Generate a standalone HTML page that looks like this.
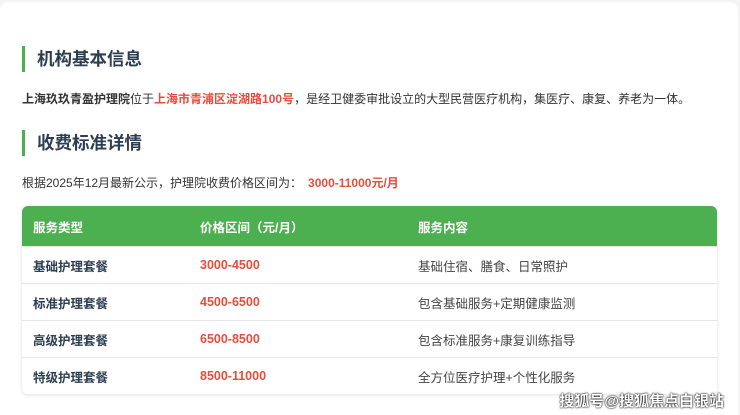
<!DOCTYPE html>
<html><head><meta charset="utf-8"><style>
html,body{margin:0;width:740px;height:415px;overflow:hidden}
body{background:#f4f4f4;font-family:"Liberation Sans","Noto Sans CJK SC",sans-serif;position:relative}
.card{position:absolute;left:0;top:2px;width:738px;height:413px;background:#fff;border-radius:8px 8px 0 0}
h2{position:absolute;left:22px;margin:0;padding-left:12px;border-left:3px solid #4caf50;font-size:17.5px;line-height:26px;color:#2c3e50;font-weight:bold}
p{position:absolute;left:22px;margin:0;font-size:12px;color:#333;white-space:nowrap}
.r{color:#e74c3c;font-weight:bold}
table{position:absolute;left:22px;top:206px;width:695px;border-collapse:collapse;font-size:12.5px;border-radius:6px;overflow:hidden;box-shadow:0 1px 4px rgba(0,0,0,.12)}
th{background:#4caf50;color:#fff;text-align:left;height:40px;padding:0 0 0 11px;font-weight:bold}
td{height:36px;padding:0 0 0 11px;border-top:1px solid #e6e6e6;color:#444}
td:first-child{font-weight:bold;color:#2c3e50}
td.r{color:#e74c3c}
.wm{position:absolute;right:16px;top:390px;font-size:15px;color:#fff;font-weight:bold;text-shadow:0 0 2px #000,0 0 1px #000}
</style></head><body>
<div class="card"></div>
<h2 style="top:46px">机构基本信息</h2>
<p style="top:90px"><b>上海玖玖青盈护理院</b>位于<span class="r">上海市青浦区淀湖路100号</span>，是经卫健委审批设立的大型民营医疗机构，集医疗、康复、养老为一体。</p>
<h2 style="top:130px">收费标准详情</h2>
<p style="top:174px">根据2025年12月最新公示，护理院收费价格区间为：<span class="r" style="margin-left:6px">3000-11000元/月</span></p>
<table>
<tr><th style="width:156px">服务类型</th><th style="width:207px">价格区间（元/月）</th><th>服务内容</th></tr>
<tr><td>基础护理套餐</td><td class="r">3000-4500</td><td>基础住宿、膳食、日常照护</td></tr>
<tr><td>标准护理套餐</td><td class="r">4500-6500</td><td>包含基础服务+定期健康监测</td></tr>
<tr><td>高级护理套餐</td><td class="r">6500-8500</td><td>包含标准服务+康复训练指导</td></tr>
<tr><td>特级护理套餐</td><td class="r">8500-11000</td><td>全方位医疗护理+个性化服务</td></tr>
</table>
<div class="wm">搜狐号@搜狐焦点白银站</div>
</body></html>
